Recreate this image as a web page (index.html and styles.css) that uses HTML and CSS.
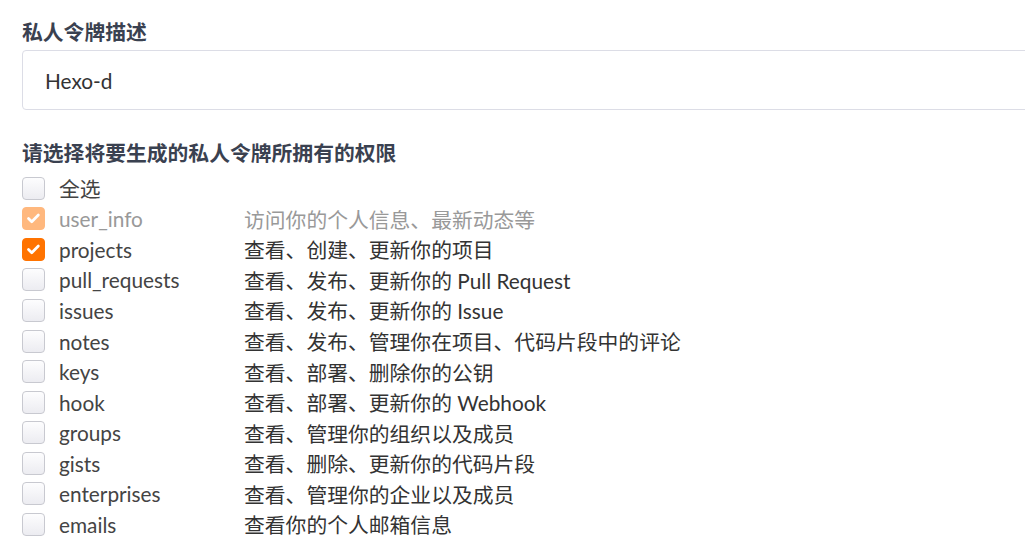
FILE: index.html
```html
<!DOCTYPE html>
<html lang="zh-CN">
<head>
  <meta charset="UTF-8">
  <meta name="viewport" content="width=device-width, initial-scale=1.0">
  <title>私人令牌</title>
  <link rel="stylesheet" href="styles.css">
</head>
<body>
  <form class="token-form">
    <div class="field">
      <label class="field-title" for="token-desc">私人令牌描述</label>
      <input class="text-input" id="token-desc" type="text" value="Hexo-d">
    </div>
    <div class="field">
      <div class="field-title scopes-title">请选择将要生成的私人令牌所拥有的权限</div>
      <ul class="scope-list">
        <li class="scope"><span class="check"></span><span class="scope-name">全选</span><span class="scope-desc"></span></li>
        <li class="scope disabled"><span class="check checked"></span><span class="scope-name">user_info</span><span class="scope-desc">访问你的个人信息、最新动态等</span></li>
        <li class="scope"><span class="check checked"></span><span class="scope-name">projects</span><span class="scope-desc">查看、创建、更新你的项目</span></li>
        <li class="scope"><span class="check"></span><span class="scope-name">pull_requests</span><span class="scope-desc">查看、发布、更新你的 Pull Request</span></li>
        <li class="scope"><span class="check"></span><span class="scope-name">issues</span><span class="scope-desc">查看、发布、更新你的 Issue</span></li>
        <li class="scope"><span class="check"></span><span class="scope-name">notes</span><span class="scope-desc">查看、发布、管理你在项目、代码片段中的评论</span></li>
        <li class="scope"><span class="check"></span><span class="scope-name">keys</span><span class="scope-desc">查看、部署、删除你的公钥</span></li>
        <li class="scope"><span class="check"></span><span class="scope-name">hook</span><span class="scope-desc">查看、部署、更新你的 Webhook</span></li>
        <li class="scope"><span class="check"></span><span class="scope-name">groups</span><span class="scope-desc">查看、管理你的组织以及成员</span></li>
        <li class="scope"><span class="check"></span><span class="scope-name">gists</span><span class="scope-desc">查看、删除、更新你的代码片段</span></li>
        <li class="scope"><span class="check"></span><span class="scope-name">enterprises</span><span class="scope-desc">查看、管理你的企业以及成员</span></li>
        <li class="scope"><span class="check"></span><span class="scope-name">emails</span><span class="scope-desc">查看你的个人邮箱信息</span></li>
      </ul>
    </div>
  </form>
</body>
</html>
```

FILE: styles.css
```css
* { margin: 0; padding: 0; box-sizing: border-box; }
body {
  font-family: Lato, 'Noto Sans CJK SC', sans-serif;
  font-size: 20.8px;
  color: #333;
  background-color: #fff;
  overflow: hidden;
}
.token-form {
  padding: 17px 0 0 22px;
}
.field-title {
  display: block;
  font-weight: bold;
  line-height: 30px;
  color: #3a4150;
}
.text-input {
  display: block;
  width: calc(100% + 10px);
  height: 60px;
  margin-top: 3px;
  padding: 0 22px;
  font: inherit;
  color: #333;
  border: 1px solid #dcdde6;
  border-radius: 4px;
  outline: none;
}
.scopes-title { margin-top: 28px; }
.scope-list {
  list-style: none;
  margin-top: 5px;
}
.scope {
  display: grid;
  grid-template-columns: 37px 185px 1fr;
  align-items: center;
  height: 30.55px;
  color: #444;
}
.scope-desc { color: #333; }
.scope.disabled .scope-name,
.scope.disabled .scope-desc { color: #999; }
.check {
  width: 23px;
  height: 23px;
  border: 1px solid #c8c9d0;
  border-radius: 4px;
  background: linear-gradient(#fdfdfe, #ececf1);
}
.check.checked {
  border-color: #ff7300;
  background: #ff7300 url("data:image/svg+xml,%3Csvg xmlns='http://www.w3.org/2000/svg' viewBox='0 0 23 23'%3E%3Cpath d='M6 11.5l3.6 3.6 7.2-7.4' fill='none' stroke='white' stroke-width='3' stroke-linecap='round' stroke-linejoin='round'/%3E%3C/svg%3E") center / 100% no-repeat;
}
.scope.disabled .check { opacity: 0.5; }
```
